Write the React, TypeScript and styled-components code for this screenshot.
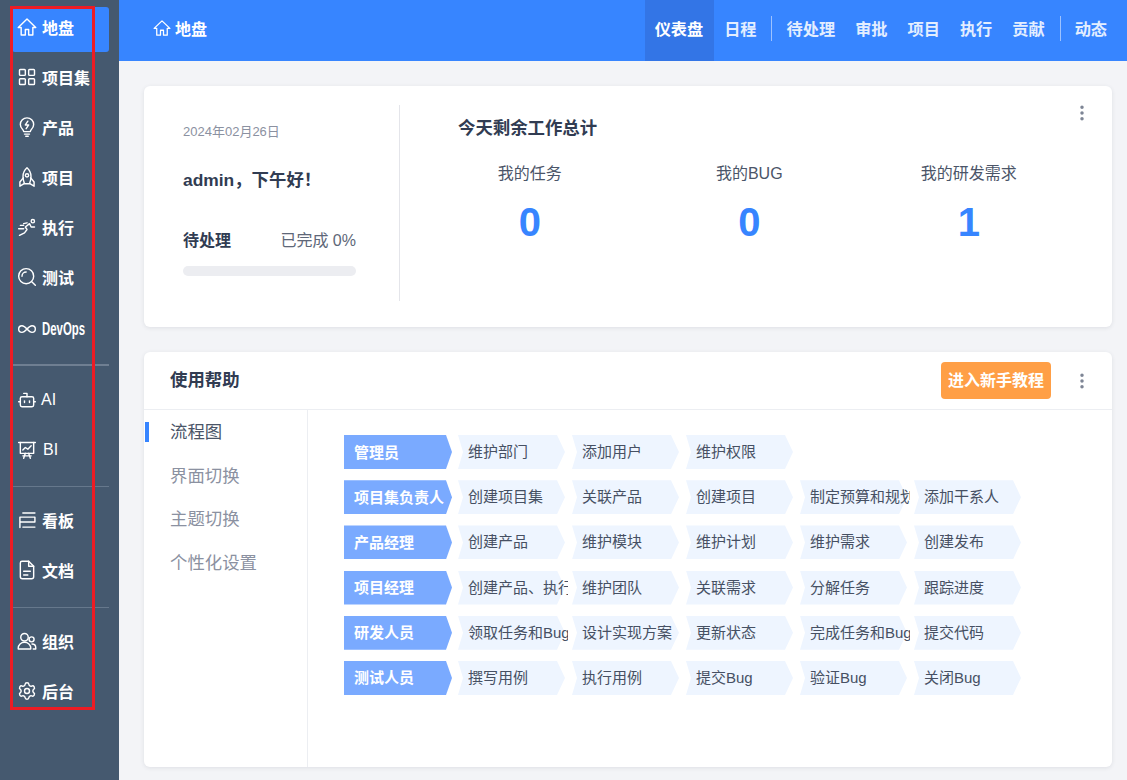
import React from "react";
import styled, { createGlobalStyle } from "styled-components";
import { LayoutGrid, Infinity as InfinityIcon, Bot, Settings, MoreVertical } from "lucide-react";

const Global = createGlobalStyle`
  html, body { margin: 0; padding: 0; height: 100%; }
  body { font-family: "Liberation Sans", "Noto Sans CJK SC", sans-serif; overflow: hidden; }
  * { box-sizing: border-box; }
`;

const Page = styled.div`
  position: relative;
  display: flex;
  width: 1127px;
  height: 780px;
  background: #f3f4f7;
  overflow: hidden;
`;

const Annotation = styled.div`
  position: absolute;
  left: 10px;
  top: 6px;
  width: 85px;
  height: 704px;
  border: 3px solid #ed1c24;
  pointer-events: none;
`;

const Sidebar = styled.nav`
  width: 119px;
  flex: none;
  background: #45596f;
  padding: 7px 10px 0 12px;
  display: flex;
  flex-direction: column;
  gap: 5px;
`;

const SideItem = styled.div<{ $active?: boolean; $latin?: boolean }>`
  height: 45px;
  flex: none;
  display: flex;
  align-items: center;
  gap: 6px;
  padding: 0 0 ${(p) => (p.$latin ? 1 : 5)}px 6px;
  color: #fff;
  font-size: 16px;
  font-weight: 700;
  border-radius: 3px;
  background: ${(p) => (p.$active ? "#3785ff" : "transparent")};
  svg { flex: none; width: 20px; height: 20px; margin: 0 -1px; }
`;

const Condensed = styled.span`
  display: inline-block;
  width: 43px;
  font-size: 18px;
  transform: scaleX(0.635);
  transform-origin: left center;
`;

const PlainLabel = styled.span<{ $shift: number }>`
  font-weight: 400;
  margin-left: ${(p) => p.$shift}px;
`;

const SideDivider = styled.div<{ $thick?: boolean; $top: number; $bottom: number }>`
  flex: none;
  height: ${(p) => (p.$thick ? 2 : 1)}px;
  background: ${(p) => (p.$thick ? "#6f7f92" : "#66788c")};
  margin: ${(p) => p.$top}px 0 ${(p) => p.$bottom}px;
`;

const Column = styled.div`
  flex: 1;
  min-width: 0;
  display: flex;
  flex-direction: column;
`;

const TopBar = styled.header`
  height: 61px;
  flex: none;
  background: #3785ff;
  color: #fff;
  display: flex;
  align-items: center;
  justify-content: space-between;
  padding: 0 10px 0 34px;
`;

const Brand = styled.div`
  display: flex;
  align-items: center;
  gap: 4px;
  padding-bottom: 5px;
  font-size: 16px;
  font-weight: 700;
  svg { width: 18px; height: 18px; }
`;

const TopNav = styled.div`
  display: flex;
  align-items: center;
  height: 100%;
`;

const TopLink = styled.div<{ $active?: boolean }>`
  height: 100%;
  display: flex;
  align-items: center;
  padding: 0 ${(p) => (p.$active ? 11 : 10)}px 5px 10px;
  font-size: 16.2px;
  font-weight: 700;
  color: ${(p) => (p.$active ? "#fff" : "#e3eeff")};
  background: ${(p) => (p.$active ? "#3375e6" : "transparent")};
`;

const TopSep = styled.div<{ $left: number; $right: number }>`
  width: 1px;
  height: 25px;
  margin: 0 ${(p) => p.$right}px 5px ${(p) => p.$left}px;
  background: #9dc2ff;
`;

const Content = styled.main`
  flex: 1;
  padding: 25px 15px 13px 25px;
  display: flex;
  flex-direction: column;
  gap: 25px;
  min-height: 0;
`;

const Card = styled.section<{ $h: number }>`
  position: relative;
  height: ${(p) => p.$h}px;
  flex: none;
  background: #fff;
  border-radius: 6px;
  box-shadow: 0 1px 4px rgba(40, 50, 70, 0.1);
  display: flex;
`;

const Kebab = styled.div<{ $top: number }>`
  position: absolute;
  right: 20px;
  top: ${(p) => p.$top}px;
  color: #7d8595;
  display: flex;
`;

const Summary = styled.div`
  width: 256px;
  height: 196px;
  margin-top: 19px;
  padding: 19px 43px 0 39px;
  border-right: 1px solid #e4e5ea;
  flex: none;
`;

const DateText = styled.div`
  font-size: 13px;
  line-height: 15px;
  color: #8b91a1;
`;

const Greeting = styled.div`
  margin-top: 29px;
  font-size: 17.4px;
  line-height: 24px;
  font-weight: 700;
  color: #313c52;
`;

const Progress = styled.div`
  margin-top: 37px;
  display: flex;
  justify-content: space-between;
  font-size: 16px;
  line-height: 24px;
`;

const ProgressLabel = styled.span`
  font-weight: 700;
  color: #313c52;
`;

const ProgressValue = styled.span`
  color: #5e6778;
`;

const Track = styled.div`
  margin-top: 13px;
  height: 10px;
  width: 173px;
  background: #ecedf1;
  border-radius: 5px;
`;

const Totals = styled.div`
  flex: 1;
  padding: 29px 0 0 58px;
`;

const TotalsTitle = styled.div`
  font-size: 17.4px;
  line-height: 26px;
  font-weight: 700;
  color: #313c52;
`;

const Stats = styled.div`
  margin-top: 21px;
  display: grid;
  grid-template-columns: repeat(3, 219.5px);
  margin-left: -38px;
`;

const Stat = styled.div`
  display: flex;
  flex-direction: column;
  align-items: center;
`;

const StatLabel = styled.div`
  font-size: 16px;
  line-height: 24px;
  color: #4b5568;
`;

const StatValue = styled.div`
  margin-top: 12px;
  font-size: 40px;
  line-height: 48px;
  font-weight: 700;
  color: #3785ff;
`;

const HelpBody = styled.div`
  flex: 1;
  display: flex;
  flex-direction: column;
`;

const HelpHeader = styled.div`
  height: 58px;
  flex: none;
  display: flex;
  align-items: center;
  padding: 0 61px 0 26px;
  border-bottom: 1px solid #eceef2;
`;

const HelpTitle = styled.div`
  flex: 1;
  padding-bottom: 4px;
  font-size: 17.4px;
  font-weight: 700;
  color: #313c52;
`;

const TourButton = styled.button`
  width: 110px;
  height: 37px;
  border: 0;
  border-radius: 4px;
  padding: 0 0 4px;
  background: #ff9f46;
  color: #fff;
  font: inherit;
  font-size: 16px;
  font-weight: 700;
`;

const HelpMain = styled.div`
  flex: 1;
  display: flex;
  min-height: 0;
`;

const Tabs = styled.div`
  width: 164px;
  flex: none;
  border-right: 1px solid #eceef2;
  display: flex;
  flex-direction: column;
`;

const Tab = styled.div<{ $active?: boolean }>`
  position: relative;
  height: 43.5px;
  padding: 0 0 2px 26px;
  display: flex;
  align-items: center;
  font-size: 17.4px;
  color: ${(p) => (p.$active ? "#4b5568" : "#8b91a1")};
  ${(p) =>
    p.$active
      ? `&::before { content: ""; position: absolute; left: 1px; top: 12px; width: 4px; height: 20px; background: #3785ff; }`
      : ""}
`;

const Flow = styled.div`
  flex: 1;
  padding: 25px 0 0 36px;
  display: flex;
  flex-direction: column;
  gap: 11.2px;
`;

const FlowRow = styled.div`
  display: flex;
  gap: 7px;
`;

const Role = styled.div`
  width: 108px;
  height: 34px;
  flex: none;
  margin-right: -1px;
  padding: 0 0 2px 10px;
  display: flex;
  align-items: center;
  white-space: nowrap;
  font-size: 15px;
  font-weight: 700;
  color: #fff;
  background: #7aaaff;
  clip-path: polygon(0 0, calc(100% - 6px) 0, 100% 50%, calc(100% - 6px) 100%, 0 100%);
`;

const Step = styled.div`
  position: relative;
  width: 107px;
  height: 34px;
  flex: none;
  padding: 0 0 3px 10px;
  display: flex;
  align-items: center;
  &::before {
    content: "";
    position: absolute;
    inset: 0;
    background: #eef5ff;
    clip-path: polygon(0 0, calc(100% - 8px) 0, 100% 50%, calc(100% - 8px) 100%, 0 100%, 5px 50%);
  }
`;

const StepText = styled.span`
  position: relative;
  width: 99.5px;
  flex: none;
  overflow: hidden;
  white-space: nowrap;
  font-size: 15px;
  color: #465063;
`;

const Icon = styled.svg.attrs({
  viewBox: "0 0 24 24",
  fill: "none",
  stroke: "currentColor",
  strokeWidth: 1.7,
  strokeLinecap: "round",
  strokeLinejoin: "round",
})``;

const HomeIcon = () => (
  <Icon>
    <path d="M12 2.500 1.500 12.500h3.500v9h5v-6.500h4v6.500h5v-9h3.500Z" />
  </Icon>
);

const Bulb = () => (
  <Icon>
    <path d="M8 17.500c0-2.400-4-4-4-8.500a8 8 0 0 1 16 0c0 4.500-4 6.100-4 8.500Z" />
    <path d="M9 20.500h6M10.500 23h3" />
    <path d="M13 5l-3 4.500h4L11 14" />
  </Icon>
);

const Rocket = () => (
  <Icon>
    <path d="M12 1c3.500 3 4.800 7 4.800 10.500 0 3-.8 6-1.800 8.500H9c-1-2.500-1.800-5.500-1.800-8.500C7.200 8 8.500 4 12 1Z" />
    <path d="M7.500 13 3.500 18v5l5-3M16.500 13l4 5v5l-5-3" />
    <circle cx="12" cy="10" r="2" />
  </Icon>
);

const Runner = () => (
  <Icon>
    <circle cx="19" cy="5" r="2" />
    <path d="M3 22l6-3 3-4-2-3 5-4 2 4h4M12 7l-4 1M2 14h6M4 10h4" />
  </Icon>
);

const Lens = () => (
  <Icon>
    <circle cx="11" cy="11" r="9" />
    <path d="M18 18l4 4M6 11a5 5 0 0 1 5-5" />
  </Icon>
);

const Board = () => (
  <Icon>
    <path d="M7 3.500h14.500M3.500 8.500h18v6h-18M3.500 8.500V21M7 20.500h14.500" />
  </Icon>
);

const Screen = () => (
  <Icon>
    <path d="M2 3h20" />
    <path d="M4 3v13h16V3" />
    <path d="M7 12l3-3 3 2 4-4" />
    <path d="M8 22l2-6M16 22l-2-6M7 19h10" />
  </Icon>
);

const Doc = () => (
  <Icon>
    <path d="M6 1.500h8l6 6V20a2.500 2.500 0 0 1-2.500 2.500h-11A2.500 2.500 0 0 1 4 20V3.500a2 2 0 0 1 2-2Z" />
    <path d="M14 1.500v6h6M8 13.500h8M8 18h5" />
  </Icon>
);

const People = () => (
  <Icon>
    <circle cx="9" cy="7.500" r="4.500" />
    <path d="M1.500 20.500c0-4 3.300-7 7.500-7s7.500 3 7.500 7v1h-15Z" />
    <circle cx="17.500" cy="10" r="3" />
    <path d="M18 15.500c2.500 0 4.500 1.800 4.500 4.500v1.500h-3" />
  </Icon>
);

const steps: [string, string[]][] = [
  ["管理员", ["维护部门", "添加用户", "维护权限"]],
  ["项目集负责人", ["创建项目集", "关联产品", "创建项目", "制定预算和规划", "添加干系人"]],
  ["产品经理", ["创建产品", "维护模块", "维护计划", "维护需求", "创建发布"]],
  ["项目经理", ["创建产品、执行", "维护团队", "关联需求", "分解任务", "跟踪进度"]],
  ["研发人员", ["领取任务和Bug", "设计实现方案", "更新状态", "完成任务和Bug", "提交代码"]],
  ["测试人员", ["撰写用例", "执行用例", "提交Bug", "验证Bug", "关闭Bug"]],
];

const stats = [
  ["我的任务", "0"],
  ["我的BUG", "0"],
  ["我的研发需求", "1"],
];

export default function App() {
  return (
    <Page>
      <Global />
      <Sidebar>
        <SideItem $active><HomeIcon />地盘</SideItem>
        <SideItem><LayoutGrid strokeWidth={1.7} />项目集</SideItem>
        <SideItem><Bulb />产品</SideItem>
        <SideItem><Rocket />项目</SideItem>
        <SideItem><Runner />执行</SideItem>
        <SideItem><Lens />测试</SideItem>
        <SideItem $latin><InfinityIcon strokeWidth={1.7} /><Condensed>DevOps</Condensed></SideItem>
        <SideDivider $thick $top={7} $bottom={7} />
        <SideItem $latin><Bot strokeWidth={1.7} /><PlainLabel $shift={-1}>AI</PlainLabel></SideItem>
        <SideItem $latin><Screen /><PlainLabel $shift={1}>BI</PlainLabel></SideItem>
        <SideDivider $top={8} $bottom={8} />
        <SideItem><Board />看板</SideItem>
        <SideItem><Doc />文档</SideItem>
        <SideDivider $top={7} $bottom={8} />
        <SideItem><People />组织</SideItem>
        <SideItem><Settings strokeWidth={1.7} />后台</SideItem>
      </Sidebar>
      <Column>
        <TopBar>
          <Brand><HomeIcon />地盘</Brand>
          <TopNav>
            <TopLink $active>仪表盘</TopLink>
            <TopLink>日程</TopLink>
            <TopSep $left={4} $right={5} />
            <TopLink>待处理</TopLink>
            <TopLink>审批</TopLink>
            <TopLink>项目</TopLink>
            <TopLink>执行</TopLink>
            <TopLink>贡献</TopLink>
            <TopSep $left={5} $right={4} />
            <TopLink>动态</TopLink>
          </TopNav>
        </TopBar>
        <Content>
          <Card $h={241}>
            <Summary>
              <DateText>2024年02月26日</DateText>
              <Greeting>admin，下午好！</Greeting>
              <Progress>
                <ProgressLabel>待处理</ProgressLabel>
                <ProgressValue>已完成 0%</ProgressValue>
              </Progress>
              <Track />
            </Summary>
            <Totals>
              <TotalsTitle>今天剩余工作总计</TotalsTitle>
              <Stats>
                {stats.map(([label, value]) => (
                  <Stat key={label}>
                    <StatLabel>{label}</StatLabel>
                    <StatValue>{value}</StatValue>
                  </Stat>
                ))}
              </Stats>
            </Totals>
            <Kebab $top={17}><MoreVertical size={20} strokeWidth={2.2} /></Kebab>
          </Card>
          <Card $h={415}>
            <HelpBody>
              <HelpHeader>
                <HelpTitle>使用帮助</HelpTitle>
                <TourButton>进入新手教程</TourButton>
              </HelpHeader>
              <HelpMain>
                <Tabs>
                  <Tab $active>流程图</Tab>
                  <Tab>界面切换</Tab>
                  <Tab>主题切换</Tab>
                  <Tab>个性化设置</Tab>
                </Tabs>
                <Flow>
                  {steps.map(([role, items]) => (
                    <FlowRow key={role}>
                      <Role>{role}</Role>
                      {items.map((s) => (
                        <Step key={s}><StepText>{s}</StepText></Step>
                      ))}
                    </FlowRow>
                  ))}
                </Flow>
              </HelpMain>
            </HelpBody>
            <Kebab $top={19}><MoreVertical size={20} strokeWidth={2.2} /></Kebab>
          </Card>
        </Content>
      </Column>
      <Annotation />
    </Page>
  );
}
